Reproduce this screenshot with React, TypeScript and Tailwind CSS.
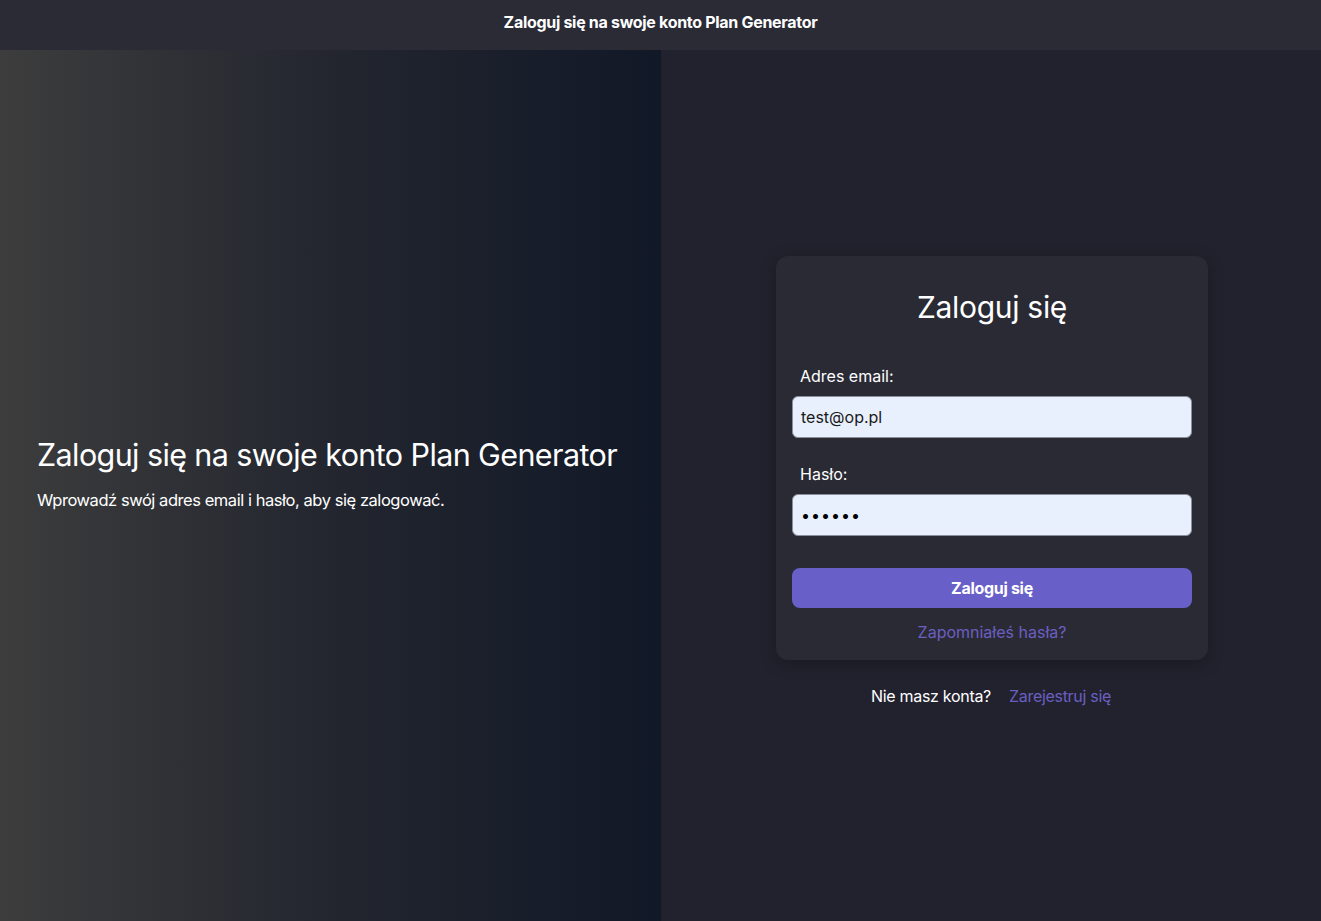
import React from 'react'

const App = () => {
    return (
        <div
            className="flex min-h-screen flex-col bg-[#22222e] text-white"
            style={{ fontFamily: 'Inter, "Noto Sans", sans-serif' }}
        >
            {/* Top bar */}
            <header className="flex h-[50px] items-center justify-center bg-[#2b2b36] pb-[6px]">
                <h1 className="text-[16px] font-bold tracking-[-0.3px] text-white">
                    Zaloguj się na swoje konto Plan Generator
                </h1>
            </header>

            <div className="flex h-[871px]">
                {/* Left intro panel */}
                <div className="flex w-[661px] flex-col justify-center bg-gradient-to-r from-[#3d3d3d] via-[#23262f] to-[#111827] pl-[37px] pb-[26px]">
                    <h2 className="text-[30.5px] font-normal tracking-[-0.6px] text-white">
                        Zaloguj się na swoje konto Plan Generator
                    </h2>
                    <p className="mt-[10px] text-[16.5px] tracking-[-0.45px] text-white">
                        Wprowadź swój adres email i hasło, aby się zalogować.
                    </p>
                </div>

                {/* Right form panel */}
                <div className="flex flex-1 flex-col items-center bg-[#22222e] pt-[206px]">
                    <div className="ml-[2px] w-[432px] rounded-xl bg-[#2a2a35] px-4 pt-[29px] pb-[16px] shadow-[0_4px_16px_rgba(0,0,0,0.25)]">
                        <h3 className="text-center text-[30px] font-normal tracking-[-0.3px] text-white">
                            Zaloguj się
                        </h3>

                        <label className="mt-[34px] block pl-2 text-[16px] text-white">
                            Adres email:
                        </label>
                        <div className="mt-[8px] flex h-[42px] items-center rounded-md border border-[#8a8f99] bg-[#e8f0fe] px-2 text-[16px] text-[#1a1a1a]">
                            test@op.pl
                        </div>

                        <label className="mt-[24px] block pl-2 text-[16px] text-white">
                            Hasło:
                        </label>
                        <div className="mt-[8px] flex h-[42px] items-center rounded-md border border-[#8a8f99] bg-[#e8f0fe] px-2 text-[16px] tracking-[1px] text-black">
                            ••••••
                        </div>

                        <button className="mt-[32px] flex h-[40px] w-full items-center justify-center rounded-lg bg-[#6860c8] text-[16px] font-bold tracking-[-0.3px] text-white">
                            Zaloguj się
                        </button>

                        <p className="mt-[12px] text-center text-[16px] text-[#6a5fc1]">
                            Zapomniałeś hasła?
                        </p>
                    </div>

                    <div className="mt-[24px] flex items-center gap-[18px] text-[16px] tracking-[-0.3px]">
                        <span className="text-white">Nie masz konta?</span>
                        <span className="text-[#6a5fc1]">Zarejestruj się</span>
                    </div>
                </div>
            </div>
        </div>
    )
}

export default App
